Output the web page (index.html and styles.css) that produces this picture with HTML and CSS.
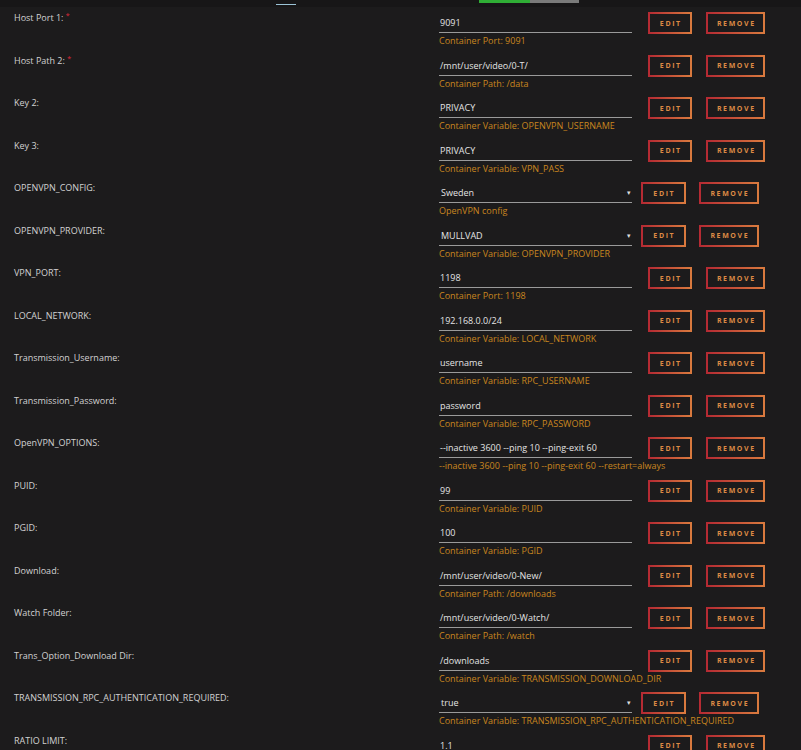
FILE: index.html
```html
<!DOCTYPE html>
<html lang="en">
<head>
    <meta charset="UTF-8">
    <meta name="viewport" content="width=device-width, initial-scale=1.0">
    <title>Docker Template</title>
    <link rel="stylesheet" href="styles.css">
</head>
<body>
    <div class="topbar">
        <span class="tab-mark"></span>
        <span class="progress"><span class="progress-fill"></span></span>
    </div>

    <div class="config">
        <div class="row">
            <div class="label">Host Port 1: <span class="req">*</span></div>
            <div class="field"><div class="value">9091</div><div class="hint">Container Port: 9091</div></div>
            <div class="actions"><button class="btn btn-edit">EDIT</button><button class="btn btn-remove">REMOVE</button></div>
        </div>
        <div class="row">
            <div class="label">Host Path 2: <span class="req">*</span></div>
            <div class="field"><div class="value">/mnt/user/video/0-T/</div><div class="hint">Container Path: /data</div></div>
            <div class="actions"><button class="btn btn-edit">EDIT</button><button class="btn btn-remove">REMOVE</button></div>
        </div>
        <div class="row">
            <div class="label">Key 2:</div>
            <div class="field"><div class="value">PRIVACY</div><div class="hint">Container Variable: OPENVPN_USERNAME</div></div>
            <div class="actions"><button class="btn btn-edit">EDIT</button><button class="btn btn-remove">REMOVE</button></div>
        </div>
        <div class="row">
            <div class="label">Key 3:</div>
            <div class="field"><div class="value">PRIVACY</div><div class="hint">Container Variable: VPN_PASS</div></div>
            <div class="actions"><button class="btn btn-edit">EDIT</button><button class="btn btn-remove">REMOVE</button></div>
        </div>
        <div class="row row-select">
            <div class="label">OPENVPN_CONFIG:</div>
            <div class="field"><div class="value select">Sweden<span class="caret">&#9662;</span></div><div class="hint">OpenVPN config</div></div>
            <div class="actions"><button class="btn btn-edit">EDIT</button><button class="btn btn-remove">REMOVE</button></div>
        </div>
        <div class="row row-select">
            <div class="label">OPENVPN_PROVIDER:</div>
            <div class="field"><div class="value select">MULLVAD<span class="caret">&#9662;</span></div><div class="hint">Container Variable: OPENVPN_PROVIDER</div></div>
            <div class="actions"><button class="btn btn-edit">EDIT</button><button class="btn btn-remove">REMOVE</button></div>
        </div>
        <div class="row">
            <div class="label">VPN_PORT:</div>
            <div class="field"><div class="value">1198</div><div class="hint">Container Port: 1198</div></div>
            <div class="actions"><button class="btn btn-edit">EDIT</button><button class="btn btn-remove">REMOVE</button></div>
        </div>
        <div class="row">
            <div class="label">LOCAL_NETWORK:</div>
            <div class="field"><div class="value">192.168.0.0/24</div><div class="hint">Container Variable: LOCAL_NETWORK</div></div>
            <div class="actions"><button class="btn btn-edit">EDIT</button><button class="btn btn-remove">REMOVE</button></div>
        </div>
        <div class="row">
            <div class="label">Transmission_Username:</div>
            <div class="field"><div class="value">username</div><div class="hint">Container Variable: RPC_USERNAME</div></div>
            <div class="actions"><button class="btn btn-edit">EDIT</button><button class="btn btn-remove">REMOVE</button></div>
        </div>
        <div class="row">
            <div class="label">Transmission_Password:</div>
            <div class="field"><div class="value">password</div><div class="hint">Container Variable: RPC_PASSWORD</div></div>
            <div class="actions"><button class="btn btn-edit">EDIT</button><button class="btn btn-remove">REMOVE</button></div>
        </div>
        <div class="row">
            <div class="label">OpenVPN_OPTIONS:</div>
            <div class="field"><div class="value">--inactive 3600 --ping 10 --ping-exit 60</div><div class="hint">--inactive 3600 --ping 10 --ping-exit 60 --restart=always</div></div>
            <div class="actions"><button class="btn btn-edit">EDIT</button><button class="btn btn-remove">REMOVE</button></div>
        </div>
        <div class="row">
            <div class="label">PUID:</div>
            <div class="field"><div class="value">99</div><div class="hint">Container Variable: PUID</div></div>
            <div class="actions"><button class="btn btn-edit">EDIT</button><button class="btn btn-remove">REMOVE</button></div>
        </div>
        <div class="row">
            <div class="label">PGID:</div>
            <div class="field"><div class="value">100</div><div class="hint">Container Variable: PGID</div></div>
            <div class="actions"><button class="btn btn-edit">EDIT</button><button class="btn btn-remove">REMOVE</button></div>
        </div>
        <div class="row">
            <div class="label">Download:</div>
            <div class="field"><div class="value">/mnt/user/video/0-New/</div><div class="hint">Container Path: /downloads</div></div>
            <div class="actions"><button class="btn btn-edit">EDIT</button><button class="btn btn-remove">REMOVE</button></div>
        </div>
        <div class="row">
            <div class="label">Watch Folder:</div>
            <div class="field"><div class="value">/mnt/user/video/0-Watch/</div><div class="hint">Container Path: /watch</div></div>
            <div class="actions"><button class="btn btn-edit">EDIT</button><button class="btn btn-remove">REMOVE</button></div>
        </div>
        <div class="row">
            <div class="label">Trans_Option_Download Dir:</div>
            <div class="field"><div class="value">/downloads</div><div class="hint">Container Variable: TRANSMISSION_DOWNLOAD_DIR</div></div>
            <div class="actions"><button class="btn btn-edit">EDIT</button><button class="btn btn-remove">REMOVE</button></div>
        </div>
        <div class="row row-select">
            <div class="label">TRANSMISSION_RPC_AUTHENTICATION_REQUIRED:</div>
            <div class="field"><div class="value select">true<span class="caret">&#9662;</span></div><div class="hint">Container Variable: TRANSMISSION_RPC_AUTHENTICATION_REQUIRED</div></div>
            <div class="actions"><button class="btn btn-edit">EDIT</button><button class="btn btn-remove">REMOVE</button></div>
        </div>
        <div class="row">
            <div class="label">RATIO LIMIT:</div>
            <div class="field"><div class="value">1.1</div></div>
            <div class="actions"><button class="btn btn-edit">EDIT</button><button class="btn btn-remove">REMOVE</button></div>
        </div>
    </div>
</body>
</html>
```

FILE: styles.css
```css
html, body { margin: 0; padding: 0; background: #1c1b1c; height: 750px; overflow: hidden; }
body { font-family: "Open Sans", "Liberation Sans", sans-serif; font-size: 9px; color: #d6d6d6; }

.topbar { height: 7px; background: #171617; position: relative; }
.tab-mark { position: absolute; left: 276px; top: 4px; width: 20px; height: 1px; background: #9cc3d6; }
.progress { position: absolute; left: 479px; top: 0; width: 100px; height: 3px; background: #7a7a7a; }
.progress-fill { display: block; width: 51px; height: 3px; background: #2fae35; }

.row { display: flex; height: 42.5px; }
.label { width: 425px; padding-left: 14px; padding-top: 5px; line-height: 12px; color: #d2d2d2; }
.req { color: #e0283a; font-size: 7px; vertical-align: top; position: relative; top: -2px; }

.field { width: 193px; padding-top: 9px; }
.value { height: 17px; line-height: 14px; border-bottom: 1px solid #9a9a9a; color: #e4e4e4; padding-left: 1px; box-sizing: border-box; white-space: nowrap; }
.select { display: flex; justify-content: space-between; padding-left: 2px; padding-right: 1px; }
.caret { font-size: 7px; color: #ddd; }
.hint { color: #c9861f; line-height: 12px; margin-top: 2px; white-space: nowrap; }

.actions { display: flex; gap: 14px; padding-left: 16px; padding-top: 5px; align-items: flex-start; }
.row-select .actions { padding-left: 9px; gap: 13px; }

.btn {
    height: 22px; padding: 0; background: #1c1b1c; color: #dc8a45;
    font-family: "Open Sans", sans-serif; font-weight: 700; font-size: 7px; letter-spacing: 1.6px;
    border: 2px solid; border-image: linear-gradient(90deg, #b52a33, #d97a3e) 1;
    box-sizing: border-box; text-indent: 1.6px;
}
.btn-edit { width: 44px; }
.btn-remove { width: 59px; }
.row-select .btn-edit { width: 45px; }
.row-select .btn-remove { width: 60px; }
```
